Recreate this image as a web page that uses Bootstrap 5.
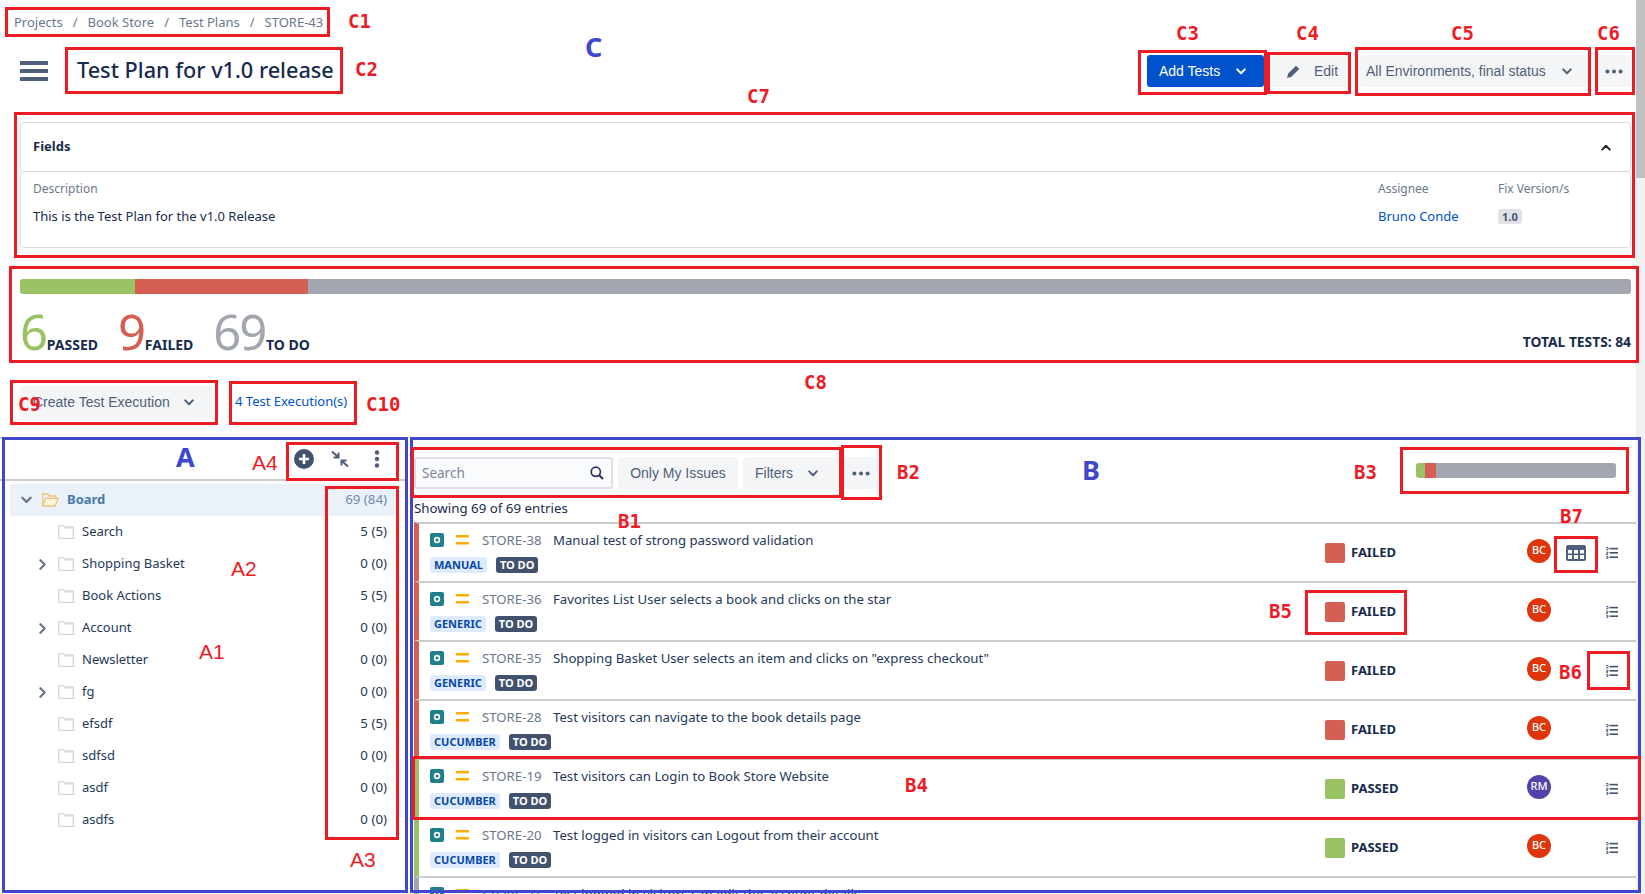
<!DOCTYPE html>
<html lang="en">
<head>
<meta charset="utf-8">
<title>Test Plan for v1.0 release</title>
<link href="https://cdn.jsdelivr.net/npm/bootstrap@5.3.0/dist/css/bootstrap.min.css" rel="stylesheet">
<style>
html,body{height:894px;overflow:hidden}
body{font-family:"Noto Sans",sans-serif;font-size:13px;color:#172b4d;background:#fff;position:relative}
.shell{height:894px}
.mainpane{width:1636px;height:894px;overflow:hidden;flex:none}
.fakebar{width:9px;background:#f1f1f1;flex:none}
.fakethumb{height:178px;background:#c1c1c1}
.crumbs{padding:12px 0 0 14px;margin:0;height:32px;font-size:13px;line-height:20px;--bs-breadcrumb-divider-color:#6b778c;--bs-breadcrumb-item-padding-x:10px;--bs-breadcrumb-margin-bottom:0}
.crumbs .breadcrumb-item,.crumbs a{color:#6b778c;text-decoration:none}
.pagehead{margin-top:23px;height:32px;padding:0 5px 0 20px}
.burger{width:28px;height:20px;flex:none;margin-right:29px}
.pagetitle{font-size:21.7px;font-weight:500;line-height:30px;margin:0;padding-bottom:2px;color:#172b4d}
.ghostbtn,.bluebtn{font-family:"Liberation Sans",sans-serif;font-size:14px;height:32px;border-radius:3px;border:0;line-height:32px;padding:0;display:flex;align-items:center}
.ghostbtn{background:#f4f5f7;color:#505f79}
.ghostbtn:hover{background:#ebecf0;color:#505f79}
.bluebtn{background:#0052cc;color:#fff;width:117px;padding-left:12px;margin-right:5px}
.editbtn{width:81px;padding-left:18px;margin-right:9px}
.editbtn svg{margin-right:14px}
.envbtn{width:230px;padding-left:7px;margin-right:8px}
.morebtn{width:34px;justify-content:center}
.chev{margin-left:auto}
.bluebtn .chev{margin-right:18px}
.envbtn .chev{margin-right:17px}
.fieldscard{margin:35px 5px 0 20px;height:126px;border:0;--bs-card-bg:transparent}
.fieldshead{height:50px;border:1px solid #d8dbe0;border-radius:4px;padding:0 19px 0 12px;font-weight:700;font-size:13px}
.fieldsbody{height:77px;margin-top:-1px;border:1px solid #d8dbe0;border-radius:4px;padding:7px 12px 0}
.fieldlbl{color:#6b778c;font-size:12px;line-height:20px}
.fieldval{font-size:13px;line-height:20px;margin-top:7px}
.assigneecol{width:120px;flex:none}
.fixcol{width:120px;flex:none}
.bluelink{color:#0052cc;text-decoration:none}
.verbadge{background:#dfe1e6;color:#42526e;font-size:11px;font-weight:700;border-radius:3px;padding:0 4px;line-height:15px;display:inline-block}
.statblock{margin:31px 5px 0 20px}
.bigbar{height:15px;border-radius:3px;overflow:hidden}
.seg-pass{background:#98c264}
.seg-fail{background:#d45f52}
.seg-todo{background:#a2a6ae}
.bigbar .seg-pass{width:115px}
.bigbar .seg-fail{width:173px}
.bigbar .seg-todo{flex:1}
.statrow{height:45px;margin-top:12px}
.statnum{font-size:49px;line-height:50px;font-weight:400;letter-spacing:-2.2px;margin-right:1px}
.statlbl{font-size:14px;font-weight:700;color:#172b4d;line-height:16px;margin-right:20px}
.c-pass{color:#98c264}.c-fail{color:#d45f52}.c-todo{color:#a2a6ae}
.statrow .lastlbl{margin-right:auto}
.totallbl{font-size:13.8px;font-weight:700;line-height:16px;margin-bottom:1px}
.execrow{margin:35px 0 0 20px;height:32px}
.execbtn{width:193px;padding-left:13px;margin-right:22px}
.execbtn .chev{margin-right:19px}
.execlink{font-size:13px}
.splitrow{margin-top:19px;height:460px}
.treepane{width:407px;flex:none;border-top:2px solid #ccc;border-right:1px solid #ccc}
.treetools{height:42px;border-bottom:2px solid #ccc;gap:17px;padding-right:26px}
.treelist{padding:3px 10px 0 10px}
.treeitem{height:32px;font-size:13px;padding-right:9px;color:#253858}
.treeitem.sel{background:#ebf1f9;border-radius:3px}
.treeitem.sel .treename{color:#4a78aa;font-weight:700}
.treeitem.sel .treecount{color:#6b8bb0}
.tw{width:36px;flex:none;padding-left:0}
.foldbox{margin-left:12px;flex:none}
.tw-sel{width:32px;padding-left:11px;flex:none}
.treename{margin-left:8px}
.treecount{margin-left:auto;font-size:13.3px}
.gridpane{margin-left:7px;width:1222px;flex:none}
.gridtools{height:85px;padding-top:20px}
.toolgroup{gap:5px}
.searchwrap{width:199px;height:32px;border:2px solid #dfe1e6;border-radius:3px;background:#fafbfc;padding:0 7px 0 6px}
.searchfield{border:0;background:transparent;outline:0;font-size:13.5px;width:160px;padding:0}
.searchfield::placeholder{color:#7a869a}
.mineBtn{width:120px;justify-content:center}
.filterBtn{width:95px;padding-left:12px}
.filterBtn .chev{margin-right:20px}
.gridmore{width:35px;justify-content:center}
.smallbar{width:200px;height:15px;border-radius:3px;overflow:hidden;margin:6px 20px 0 auto}
.smallbar .seg-pass{width:9px}
.smallbar .seg-fail{width:11px}
.smallbar .seg-todo{flex:1}
.countline{font-size:13.3px;line-height:20px;margin-top:-24px;padding-bottom:4px;height:24px}
.rowlist{--bs-list-group-border-width:0;--bs-list-group-bg:transparent;border-radius:0}
.planrow{height:59px;border-top:2px solid #ccc!important;border-left:5px solid;padding:0;background:#fff;border-radius:0!important}
.edge-fail{border-left-color:#d45f52!important}
.edge-pass{border-left-color:#98c264!important}
.edge-todo{border-left-color:#a2a6ae!important}
.rowleft{padding:6px 0 0 11px;width:906px;flex:none}
.rowline{height:20px;font-size:13px;line-height:20px}
.issueicon{margin-right:12px;flex:none}
.prioicon{margin-right:13px;flex:none}
.issuekey{color:#6b778c;width:71px;flex:none;font-size:13.2px}
.issuename{color:#253858;font-size:13.2px}
.taglineup{margin-top:7px;gap:9px;height:16px}
.bluetag,.darktag{font-size:11px;font-weight:700;line-height:16px;border-radius:3px;padding:0 4px;height:16px;text-transform:uppercase}
.bluetag{background:#deebff;color:#0747a6}
.darktag{background:#42526e;color:#fff}
.statuscell{width:202px;flex:none;height:100%}
.swatch{width:20px;height:20px;border-radius:2px;margin-right:6px;flex:none}
.statuslabel{font-weight:700;font-size:13px;color:#172b4d}
.avatarball{width:24px;height:24px;border-radius:50%;color:#fff;font-size:11px;font-weight:500;flex:none;margin-top:-4px}
.ava-bc{background:#de350b}
.ava-rm{background:#5243aa}
.stepscell{margin-left:55px;flex:none}
.tableicon{margin-left:15px;margin-right:-35px;flex:none}
.notes{position:absolute;inset:0;pointer-events:none}
.nb,.nl{position:absolute}
.nb{border:3px solid #ed1c24}
.nb.blue{border-color:#3f48cc}
.nl{color:#ed1c24;font-family:"DejaVu Sans Mono",monospace;font-size:19px;font-weight:700;line-height:22px;white-space:nowrap}
.nl.san{font-family:"Liberation Sans",sans-serif;font-weight:400;font-size:21px}
.nl.big{color:#3f48cc;font-family:"Noto Sans",sans-serif;font-weight:700;font-size:27px;line-height:30px}
.b1{left:5px;top:7px;width:325px;height:30px}.b2{left:65px;top:47px;width:278px;height:47px}
.b3{left:1138px;top:50px;width:129px;height:45px}.b4{left:1267px;top:52px;width:84px;height:42px}
.b5{left:1355px;top:47px;width:236px;height:49px}.b6{left:1595px;top:47px;width:40px;height:48px}
.b7{left:14px;top:112px;width:1621px;height:146px}.b8{left:9px;top:266px;width:1630px;height:97px}
.b9{left:10px;top:380px;width:208px;height:45px}.b10{left:229px;top:381px;width:128px;height:44px}
.ba{left:2px;top:437px;width:406px;height:456px}.bbb{left:410px;top:437px;width:1231px;height:456px}
.ba4{left:286px;top:442px;width:113px;height:39px}.ba3{left:325px;top:486px;width:74px;height:354px}
.bb1{left:411px;top:447px;width:431px;height:51px}.bb2{left:841px;top:445px;width:41px;height:55px}
.bb3{left:1400px;top:447px;width:229px;height:47px}.bb7{left:1554px;top:536px;width:44px;height:37px}
.bb5{left:1305px;top:590px;width:102px;height:45px}.bb6{left:1587px;top:651px;width:43px;height:39px}
.bb4{left:412px;top:756px;width:1229px;height:64px}
.l1{left:348px;top:10px}.l2{left:355px;top:58px}.l3{left:1176px;top:22px}.l4{left:1296px;top:22px}
.l5{left:1451px;top:22px}.l6{left:1597px;top:22px}.l7{left:747px;top:85px}.l8{left:804px;top:371px}
.l9{left:18px;top:393px}.l10{left:366px;top:393px}
.lc{left:585px;top:32px}.la{left:176px;top:442px}.lb{left:1082px;top:455px}
.la4{left:252px;top:452px}.la2{left:231px;top:558px}.la1{left:199px;top:641px}.la3{left:350px;top:849px}
.lb1{left:618px;top:510px}.lb2{left:897px;top:461px}.lb3{left:1354px;top:461px}.lb4{left:905px;top:774px}
.lb5{left:1269px;top:600px}.lb6{left:1559px;top:661px}.lb7{left:1560px;top:505px}
</style>
</head>
<body>
<svg width="0" height="0" class="d-block position-absolute">
<defs>
<symbol id="i-chev" viewBox="0 0 10 7"><path d="M1.2 1.4 5 5.2l3.8-3.8" fill="none" stroke="currentColor" stroke-width="2" stroke-linecap="round" stroke-linejoin="round"/></symbol>
<symbol id="i-right" viewBox="0 0 7 11"><path d="M1.4 1.2 5.6 5.5 1.4 9.8" fill="none" stroke="#6b778c" stroke-width="2.2" stroke-linecap="round" stroke-linejoin="round"/></symbol>
<symbol id="i-dots" viewBox="0 0 18 5"><circle cx="2.4" cy="2.5" r="2"/><circle cx="9" cy="2.5" r="2"/><circle cx="15.6" cy="2.5" r="2"/></symbol>
<symbol id="i-folder" viewBox="0 0 16 14"><path d="M.7.7h5.2l1.6 2.2h7.8v10.4H.7z" fill="#fff" stroke="#d6d6d6" stroke-width="1.3"/><path d="M6 1h9.3v2H7.5z" fill="#dcdcdc"/></symbol>
<symbol id="i-issue" viewBox="0 0 14 14"><rect width="14" height="14" rx="2" fill="#1f7f8a"/><circle cx="7" cy="7" r="3.2" fill="#fff"/><circle cx="7" cy="7" r="1.6" fill="#1f7f8a"/></symbol>
<symbol id="i-prio" viewBox="0 0 13 10"><rect y="0" width="13" height="2.4" rx=".6" fill="#ffab00"/><rect y="7" width="13" height="2.4" rx=".6" fill="#ffab00"/></symbol>
<symbol id="i-steps" viewBox="0 0 12 12"><path d="M0 .4h2v2.4M0 2.8h2" fill="none" stroke="#42526e" stroke-width=".9"/><path d="M.2 5.2h1.8v1.2H.2v1.2H2M.2 9.4H2v2.3H.2M.8 10.5H2" fill="none" stroke="#42526e" stroke-width=".8"/><rect x="3.6" y=".8" width="8.4" height="1.6" fill="#42526e"/><rect x="3.6" y="5" width="8.4" height="1.6" fill="#42526e"/><rect x="3.6" y="9.4" width="8.4" height="1.6" fill="#42526e"/></symbol>
</defs>
</svg>

<div class="shell d-flex">
<div class="mainpane">
  <nav aria-label="breadcrumb">
    <ol class="breadcrumb crumbs">
      <li class="breadcrumb-item"><a href="#">Projects</a></li>
      <li class="breadcrumb-item"><a href="#">Book Store</a></li>
      <li class="breadcrumb-item"><a href="#">Test Plans</a></li>
      <li class="breadcrumb-item active">STORE-43</li>
    </ol>
  </nav>

  <div class="pagehead d-flex align-items-center">
    <svg class="burger" viewBox="0 0 28 20"><rect width="28" height="4" y="0" fill="#505f79"/><rect width="28" height="4" y="8" fill="#505f79"/><rect width="28" height="4" y="16" fill="#505f79"/></svg>
    <h1 class="pagetitle">Test Plan for v1.0 release</h1>
    <div class="d-flex ms-auto">
      <button class="btn bluebtn">Add Tests<svg class="chev" width="10" height="7"><use href="#i-chev"/></svg></button>
      <button class="btn ghostbtn editbtn"><svg width="13" height="13" viewBox="0 0 13 13"><path d="M9 .8 12.2 4 4.4 11.8 0 13l1.2-4.4z" fill="#505f79"/></svg>Edit</button>
      <button class="btn ghostbtn envbtn">All Environments, final status<svg class="chev" width="10" height="7"><use href="#i-chev"/></svg></button>
      <button class="btn ghostbtn morebtn"><svg width="18" height="5" fill="#505f79"><use href="#i-dots"/></svg></button>
    </div>
  </div>

  <div class="card fieldscard">
    <div class="fieldshead d-flex align-items-center justify-content-between">
      <span>Fields</span>
      <svg width="10" height="7" class="text-dark"><g transform="rotate(180 5 3.5)"><use href="#i-chev"/></g></svg>
    </div>
    <div class="fieldsbody d-flex">
      <div class="flex-grow-1">
        <div class="fieldlbl">Description</div>
        <div class="fieldval">This is the Test Plan for the v1.0 Release</div>
      </div>
      <div class="assigneecol">
        <div class="fieldlbl">Assignee</div>
        <div class="fieldval"><a class="bluelink" href="#">Bruno Conde</a></div>
      </div>
      <div class="fixcol">
        <div class="fieldlbl">Fix Version/s</div>
        <div class="fieldval"><span class="verbadge">1.0</span></div>
      </div>
    </div>
  </div>

  <div class="statblock">
    <div class="bigbar d-flex"><div class="seg-pass"></div><div class="seg-fail"></div><div class="seg-todo"></div></div>
    <div class="statrow d-flex align-items-baseline">
      <span class="statnum c-pass">6</span><span class="statlbl">PASSED</span>
      <span class="statnum c-fail">9</span><span class="statlbl">FAILED</span>
      <span class="statnum c-todo">69</span><span class="statlbl lastlbl">TO DO</span>
      <span class="totallbl align-self-end">TOTAL TESTS: 84</span>
    </div>
  </div>

  <div class="execrow d-flex align-items-center">
    <button class="btn ghostbtn execbtn">Create Test Execution<svg class="chev" width="10" height="7"><use href="#i-chev"/></svg></button>
    <a class="bluelink execlink" href="#">4 Test Execution(s)</a>
  </div>

  <div class="splitrow d-flex">
    <div class="treepane">
      <div class="treetools d-flex align-items-center justify-content-end">
        <svg width="20" height="20" viewBox="0 0 20 20"><circle cx="10" cy="10" r="10" fill="#42526e"/><path d="M10 5v10M5 10h10" stroke="#fff" stroke-width="2.6"/></svg>
        <svg width="18" height="18" viewBox="0 0 18 18"><path d="M1 1.5l5.5 5M7.5 2.5V7.5H2.5" fill="none" stroke="#505f79" stroke-width="2"/><path d="M17 16.5l-5.5-5M10.5 15.5V10.5h5" fill="none" stroke="#505f79" stroke-width="2"/></svg>
        <svg class="ms-2" width="6" height="18" viewBox="0 0 6 18" fill="#505f79"><circle cx="3" cy="2.5" r="2.2"/><circle cx="3" cy="9" r="2.2"/><circle cx="3" cy="15.5" r="2.2"/></svg>
      </div>
      <div class="treelist">
        <div class="treeitem sel d-flex align-items-center"><span class="tw-sel"><svg class="d-block" width="11" height="8" color="#6b778c"><use href="#i-chev"/></svg></span>
          <svg width="17" height="14" viewBox="0 0 17 14"><path d="M.7 12.6V1h5l1.5 2h6.6v2.2" fill="none" stroke="#f0c478" stroke-width="1.3"/><path d="M.8 13h12.4L16 5.4H3.4z" fill="#fdf3e0" stroke="#f0c478" stroke-width="1.3"/></svg>
          <span class="treename">Board</span><span class="treecount">69 (84)</span></div>
        <div class="treeitem d-flex align-items-center"><span class="tw"></span><span class="foldbox"><svg class="d-block" width="16" height="14"><use href="#i-folder"/></svg></span><span class="treename">Search</span><span class="treecount">5 (5)</span></div>
        <div class="treeitem d-flex align-items-center"><span class="tw d-flex justify-content-end"><svg width="7" height="11"><use href="#i-right"/></svg></span><span class="foldbox"><svg class="d-block" width="16" height="14"><use href="#i-folder"/></svg></span><span class="treename">Shopping Basket</span><span class="treecount">0 (0)</span></div>
        <div class="treeitem d-flex align-items-center"><span class="tw"></span><span class="foldbox"><svg class="d-block" width="16" height="14"><use href="#i-folder"/></svg></span><span class="treename">Book Actions</span><span class="treecount">5 (5)</span></div>
        <div class="treeitem d-flex align-items-center"><span class="tw d-flex justify-content-end"><svg width="7" height="11"><use href="#i-right"/></svg></span><span class="foldbox"><svg class="d-block" width="16" height="14"><use href="#i-folder"/></svg></span><span class="treename">Account</span><span class="treecount">0 (0)</span></div>
        <div class="treeitem d-flex align-items-center"><span class="tw"></span><span class="foldbox"><svg class="d-block" width="16" height="14"><use href="#i-folder"/></svg></span><span class="treename">Newsletter</span><span class="treecount">0 (0)</span></div>
        <div class="treeitem d-flex align-items-center"><span class="tw d-flex justify-content-end"><svg width="7" height="11"><use href="#i-right"/></svg></span><span class="foldbox"><svg class="d-block" width="16" height="14"><use href="#i-folder"/></svg></span><span class="treename">fg</span><span class="treecount">0 (0)</span></div>
        <div class="treeitem d-flex align-items-center"><span class="tw"></span><span class="foldbox"><svg class="d-block" width="16" height="14"><use href="#i-folder"/></svg></span><span class="treename">efsdf</span><span class="treecount">5 (5)</span></div>
        <div class="treeitem d-flex align-items-center"><span class="tw"></span><span class="foldbox"><svg class="d-block" width="16" height="14"><use href="#i-folder"/></svg></span><span class="treename">sdfsd</span><span class="treecount">0 (0)</span></div>
        <div class="treeitem d-flex align-items-center"><span class="tw"></span><span class="foldbox"><svg class="d-block" width="16" height="14"><use href="#i-folder"/></svg></span><span class="treename">asdf</span><span class="treecount">0 (0)</span></div>
        <div class="treeitem d-flex align-items-center"><span class="tw"></span><span class="foldbox"><svg class="d-block" width="16" height="14"><use href="#i-folder"/></svg></span><span class="treename">asdfs</span><span class="treecount">0 (0)</span></div>
      </div>
    </div>

    <div class="gridpane">
      <div class="gridtools d-flex align-items-start">
        <div class="d-flex toolgroup">
          <div class="searchwrap d-flex align-items-center justify-content-between">
            <input class="searchfield" type="text" placeholder="Search" aria-label="Search">
            <svg width="14" height="14" viewBox="0 0 14 14"><circle cx="5.8" cy="5.8" r="4.6" fill="none" stroke="#253858" stroke-width="1.7"/><path d="M9.2 9.2 13 13" stroke="#253858" stroke-width="2"/></svg>
          </div>
          <button class="btn ghostbtn mineBtn">Only My Issues</button>
          <button class="btn ghostbtn filterBtn">Filters<svg class="chev" width="10" height="7"><use href="#i-chev"/></svg></button>
          <button class="btn ghostbtn gridmore"><svg width="18" height="5" fill="#505f79"><use href="#i-dots"/></svg></button>
        </div>
        <div class="smallbar d-flex"><div class="seg-pass"></div><div class="seg-fail"></div><div class="seg-todo"></div></div>
      </div>
      <div class="countline">Showing 69 of 69 entries</div>
      <div class="list-group rowlist">

        <div class="list-group-item planrow edge-fail d-flex">
          <div class="rowleft">
            <div class="rowline d-flex align-items-center"><svg class="issueicon" width="14" height="14"><use href="#i-issue"/></svg><svg class="prioicon" width="13" height="10"><use href="#i-prio"/></svg><span class="issuekey">STORE-38</span><span class="issuename">Manual test of strong password validation</span></div>
            <div class="taglineup d-flex"><span class="bluetag">Manual</span><span class="darktag">To Do</span></div>
          </div>
          <div class="statuscell d-flex align-items-center"><span class="swatch seg-fail"></span><span class="statuslabel">FAILED</span></div>
          <div class="d-flex align-items-center"><span class="avatarball ava-bc d-flex align-items-center justify-content-center">BC</span>
          <svg class="tableicon" width="20" height="16" viewBox="0 0 20 16"><rect width="20" height="16" rx="2" fill="#505f79"/><path d="M2 5h4v3.4H2zM8 5h4v3.4H8zM14 5h4v3.4h-4zM2 10h4v4H2zM8 10h4v4H8zM14 10h4v4h-4z" fill="#fff"/></svg>
          <svg class="stepscell" width="12" height="12"><use href="#i-steps"/></svg></div>
        </div>

        <div class="list-group-item planrow edge-fail d-flex">
          <div class="rowleft">
            <div class="rowline d-flex align-items-center"><svg class="issueicon" width="14" height="14"><use href="#i-issue"/></svg><svg class="prioicon" width="13" height="10"><use href="#i-prio"/></svg><span class="issuekey">STORE-36</span><span class="issuename">Favorites List User selects a book and clicks on the star</span></div>
            <div class="taglineup d-flex"><span class="bluetag">Generic</span><span class="darktag">To Do</span></div>
          </div>
          <div class="statuscell d-flex align-items-center"><span class="swatch seg-fail"></span><span class="statuslabel">FAILED</span></div>
          <div class="d-flex align-items-center"><span class="avatarball ava-bc d-flex align-items-center justify-content-center">BC</span>
          <svg class="stepscell" width="12" height="12"><use href="#i-steps"/></svg></div>
        </div>

        <div class="list-group-item planrow edge-fail d-flex">
          <div class="rowleft">
            <div class="rowline d-flex align-items-center"><svg class="issueicon" width="14" height="14"><use href="#i-issue"/></svg><svg class="prioicon" width="13" height="10"><use href="#i-prio"/></svg><span class="issuekey">STORE-35</span><span class="issuename">Shopping Basket User selects an item and clicks on "express checkout"</span></div>
            <div class="taglineup d-flex"><span class="bluetag">Generic</span><span class="darktag">To Do</span></div>
          </div>
          <div class="statuscell d-flex align-items-center"><span class="swatch seg-fail"></span><span class="statuslabel">FAILED</span></div>
          <div class="d-flex align-items-center"><span class="avatarball ava-bc d-flex align-items-center justify-content-center">BC</span>
          <svg class="stepscell" width="12" height="12"><use href="#i-steps"/></svg></div>
        </div>

        <div class="list-group-item planrow edge-fail d-flex">
          <div class="rowleft">
            <div class="rowline d-flex align-items-center"><svg class="issueicon" width="14" height="14"><use href="#i-issue"/></svg><svg class="prioicon" width="13" height="10"><use href="#i-prio"/></svg><span class="issuekey">STORE-28</span><span class="issuename">Test visitors can navigate to the book details page</span></div>
            <div class="taglineup d-flex"><span class="bluetag">Cucumber</span><span class="darktag">To Do</span></div>
          </div>
          <div class="statuscell d-flex align-items-center"><span class="swatch seg-fail"></span><span class="statuslabel">FAILED</span></div>
          <div class="d-flex align-items-center"><span class="avatarball ava-bc d-flex align-items-center justify-content-center">BC</span>
          <svg class="stepscell" width="12" height="12"><use href="#i-steps"/></svg></div>
        </div>

        <div class="list-group-item planrow edge-pass d-flex">
          <div class="rowleft">
            <div class="rowline d-flex align-items-center"><svg class="issueicon" width="14" height="14"><use href="#i-issue"/></svg><svg class="prioicon" width="13" height="10"><use href="#i-prio"/></svg><span class="issuekey">STORE-19</span><span class="issuename">Test visitors can Login to Book Store Website</span></div>
            <div class="taglineup d-flex"><span class="bluetag">Cucumber</span><span class="darktag">To Do</span></div>
          </div>
          <div class="statuscell d-flex align-items-center"><span class="swatch seg-pass"></span><span class="statuslabel">PASSED</span></div>
          <div class="d-flex align-items-center"><span class="avatarball ava-rm d-flex align-items-center justify-content-center">RM</span>
          <svg class="stepscell" width="12" height="12"><use href="#i-steps"/></svg></div>
        </div>

        <div class="list-group-item planrow edge-pass d-flex">
          <div class="rowleft">
            <div class="rowline d-flex align-items-center"><svg class="issueicon" width="14" height="14"><use href="#i-issue"/></svg><svg class="prioicon" width="13" height="10"><use href="#i-prio"/></svg><span class="issuekey">STORE-20</span><span class="issuename">Test logged in visitors can Logout from their account</span></div>
            <div class="taglineup d-flex"><span class="bluetag">Cucumber</span><span class="darktag">To Do</span></div>
          </div>
          <div class="statuscell d-flex align-items-center"><span class="swatch seg-pass"></span><span class="statuslabel">PASSED</span></div>
          <div class="d-flex align-items-center"><span class="avatarball ava-bc d-flex align-items-center justify-content-center">BC</span>
          <svg class="stepscell" width="12" height="12"><use href="#i-steps"/></svg></div>
        </div>

        <div class="list-group-item planrow edge-todo d-flex">
          <div class="rowleft">
            <div class="rowline d-flex align-items-center"><svg class="issueicon" width="14" height="14"><use href="#i-issue"/></svg><svg class="prioicon" width="13" height="10"><use href="#i-prio"/></svg><span class="issuekey">STORE-21</span><span class="issuename">Test logged in visitors can edit the account details</span></div>
          </div>
        </div>

      </div>
    </div>
  </div>
</div>
<div class="fakebar"><div class="fakethumb"></div></div>
</div>

<div class="notes">
  <div class="nb b1"></div><div class="nb b2"></div><div class="nb b3"></div><div class="nb b4"></div><div class="nb b5"></div><div class="nb b6"></div><div class="nb b7"></div><div class="nb b8"></div><div class="nb b9"></div><div class="nb b10"></div>
  <div class="nb blue ba"></div><div class="nb blue bbb"></div>
  <div class="nb ba4"></div><div class="nb ba3"></div><div class="nb bb1"></div><div class="nb bb2"></div><div class="nb bb3"></div><div class="nb bb7"></div><div class="nb bb5"></div><div class="nb bb6"></div><div class="nb bb4"></div>
  <span class="nl l1">C1</span><span class="nl l2">C2</span><span class="nl l3">C3</span><span class="nl l4">C4</span><span class="nl l5">C5</span><span class="nl l6">C6</span><span class="nl l7">C7</span><span class="nl l8">C8</span><span class="nl l9">C9</span><span class="nl l10">C10</span>
  <span class="nl big lc">C</span><span class="nl big la">A</span><span class="nl big lb">B</span>
  <span class="nl san la4">A4</span><span class="nl san la2">A2</span><span class="nl san la1">A1</span><span class="nl san la3">A3</span>
  <span class="nl lb1">B1</span><span class="nl lb2">B2</span><span class="nl lb3">B3</span><span class="nl lb4">B4</span><span class="nl lb5">B5</span><span class="nl lb6">B6</span><span class="nl lb7">B7</span>
</div>
<script src="https://cdn.jsdelivr.net/npm/bootstrap@5.3.0/dist/js/bootstrap.bundle.min.js"></script>
</body>
</html>
